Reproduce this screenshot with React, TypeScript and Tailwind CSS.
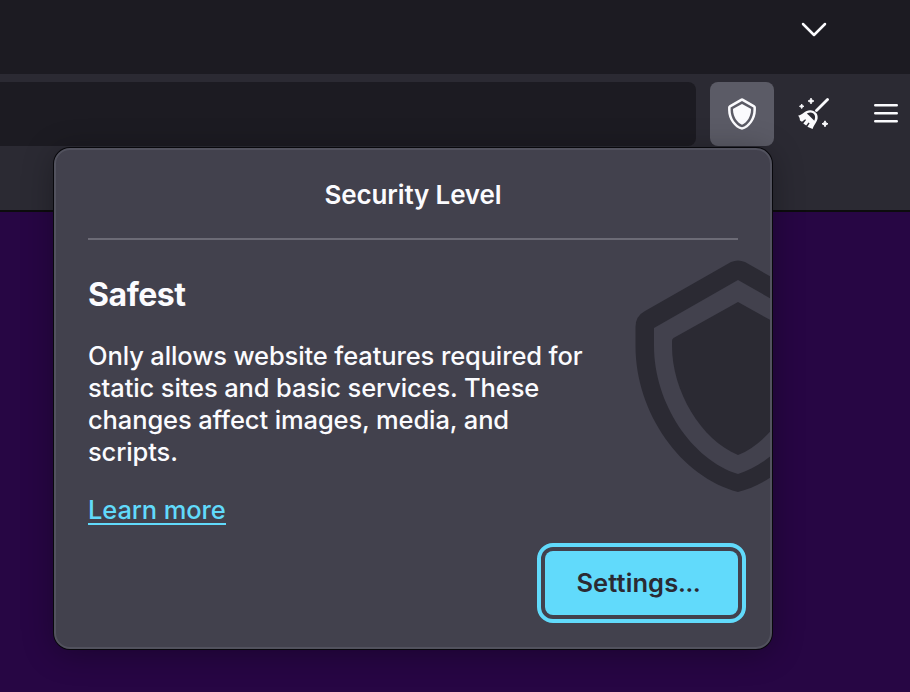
function Shield({ className }: { className: string }) {
  return (
    <svg className={className} viewBox="0 0 206 232" fill="currentColor">
      <path
        fillRule="evenodd"
        d="M96 2Q103 -1 110 2L196 51Q205.500 56 205.500 67V86C205.500 153 160 217 103 232C46 217 .5 153 .5 86V67Q.5 56 10 51ZM103 20L19 68V86C19 143 57 200 103 214C149 200 187 143 187 86V68Z"
      />
      <path d="M103 42L167.500 78Q169 79 169 81V86C169 131 140 180 103 195C66 180 37 131 37 86V81Q37 79 38.500 78Z" />
    </svg>
  );
}

function Broom() {
  return (
    <svg className="h-8 w-8" viewBox="0 0 32 32" fill="currentColor">
      <path d="M29.500 1.500L18.500 12.500" stroke="currentColor" strokeWidth="2.800" strokeLinecap="round" />
      <path
        fillRule="evenodd"
        d="M.2 17.600C4.500 17 6.800 12.200 12.200 12.200C17 12.200 20.300 15.800 19.600 20.500C19 24.300 16 26.500 14.600 31L9.400 28.700L11.600 25.200L10.500 24.400L8.200 27.600L5.300 25.600L8 22L7.200 21.300L4 23.800L2 22.400L1.600 20ZM8.800 15.600L10.800 17.200L16.300 22.700C18.900 17.300 14.900 12.300 8.800 15.600Z"
      />
      <path d="M13 0Q13.400 2.600 16 3Q13.400 3.400 13 6Q12.600 3.400 10 3Q12.600 2.600 13 0Z" stroke="currentColor" strokeWidth=".8" />
      <path d="M3.700 6Q4 8 6 8.300Q4 8.600 3.700 10.600Q3.400 8.600 1.400 8.300Q3.400 8 3.700 6Z" stroke="currentColor" strokeWidth=".8" />
      <path d="M27 22.800Q27.400 25.400 30 25.800Q27.400 26.200 27 28.800Q26.600 26.200 24 25.800Q26.600 25.400 27 22.800Z" stroke="currentColor" strokeWidth="1" />
    </svg>
  );
}

function SecurityPanel() {
  return (
    <section className="absolute left-[54px] top-[148px] flex h-[501px] w-[718px] flex-col overflow-hidden rounded-2xl border-2 border-[#52525e] bg-[#42414d] pl-8 pr-6 shadow-[0_0_0_1px_#08080c,0_4px_32px_rgba(0,0,0,0.32)]">
      <Shield className="absolute left-[579px] top-[110px] h-[232px] w-[206px] text-[#2b2a33]" />
      <header className="mr-2 flex h-[90px] shrink-0 items-center justify-center border-b-2 border-[#6c6b76] pt-0.5">
        <h1 className="text-[26px] font-[640] leading-8 tracking-[-0.15px]">Security Level</h1>
      </header>
      <h2 className="mt-[35px] text-[32px] font-[650] leading-10 tracking-[-0.45px]">Safest</h2>
      <p className="mt-[25px] w-[520px] text-[25.5px] font-[450] leading-8 tracking-[-0.12px]">
        Only allows website features required for
        <br />
        static sites and basic services. These
        <br />
        changes affect images, media, and
        <br />
        scripts.
      </p>
      <a className="mt-[28px] w-fit border-b-2 border-[#61dafb] text-[25.5px] font-[450] leading-[27px] tracking-[-0.12px] text-[#61dafb]">
        Learn more
      </a>
      <button className="mt-[18px] w-fit self-end rounded-2xl border-4 border-[#61dafb] p-1">
        <span className="flex h-16 w-[193px] items-center justify-center rounded-lg bg-[#61dafb] pr-[6px] text-[25.5px] font-[640] tracking-[0.1px] text-[#2b2a33]">
          <span>
            Settings<span className="text-[21px] font-extrabold">…</span>
          </span>
        </span>
      </button>
    </section>
  );
}

export default function App() {
  return (
    <main className="relative flex h-[692px] w-[910px] flex-col overflow-hidden bg-[#270644] font-['Inter','Liberation_Sans',sans-serif] text-[#fbfbfe]">
      <div className="flex h-[74px] shrink-0 justify-end bg-[#1c1b22] pr-[83px] pt-[21px]">
        <svg className="h-4 w-[26px]" viewBox="0 0 26 16" fill="none" stroke="currentColor" strokeWidth="2.500" strokeLinecap="round" strokeLinejoin="round">
          <path d="M2 3L13 14L24 3" />
        </svg>
      </div>
      <div className="flex h-[138px] shrink-0 items-start border-b-2 border-[#0c0c0d] bg-[#2b2a33] pt-2">
        <div className="h-16 w-[696px] rounded-r-lg bg-[#1c1b22]" />
        <div className="ml-3.5 flex h-16 w-16 items-center justify-center rounded-lg bg-[#5b5b66]">
          <Shield className="h-8 w-7" />
        </div>
        <div className="ml-6 flex h-16 items-center">
          <Broom />
        </div>
        <svg className="ml-11 mt-[21px] h-5 w-6" viewBox="0 0 24 20" stroke="currentColor" strokeWidth="2.500" strokeLinecap="round">
          <path d="M1.250 2.250H22.750M1.250 10.250H22.750M1.250 18.250H22.750" />
        </svg>
      </div>
      <SecurityPanel />
    </main>
  );
}
